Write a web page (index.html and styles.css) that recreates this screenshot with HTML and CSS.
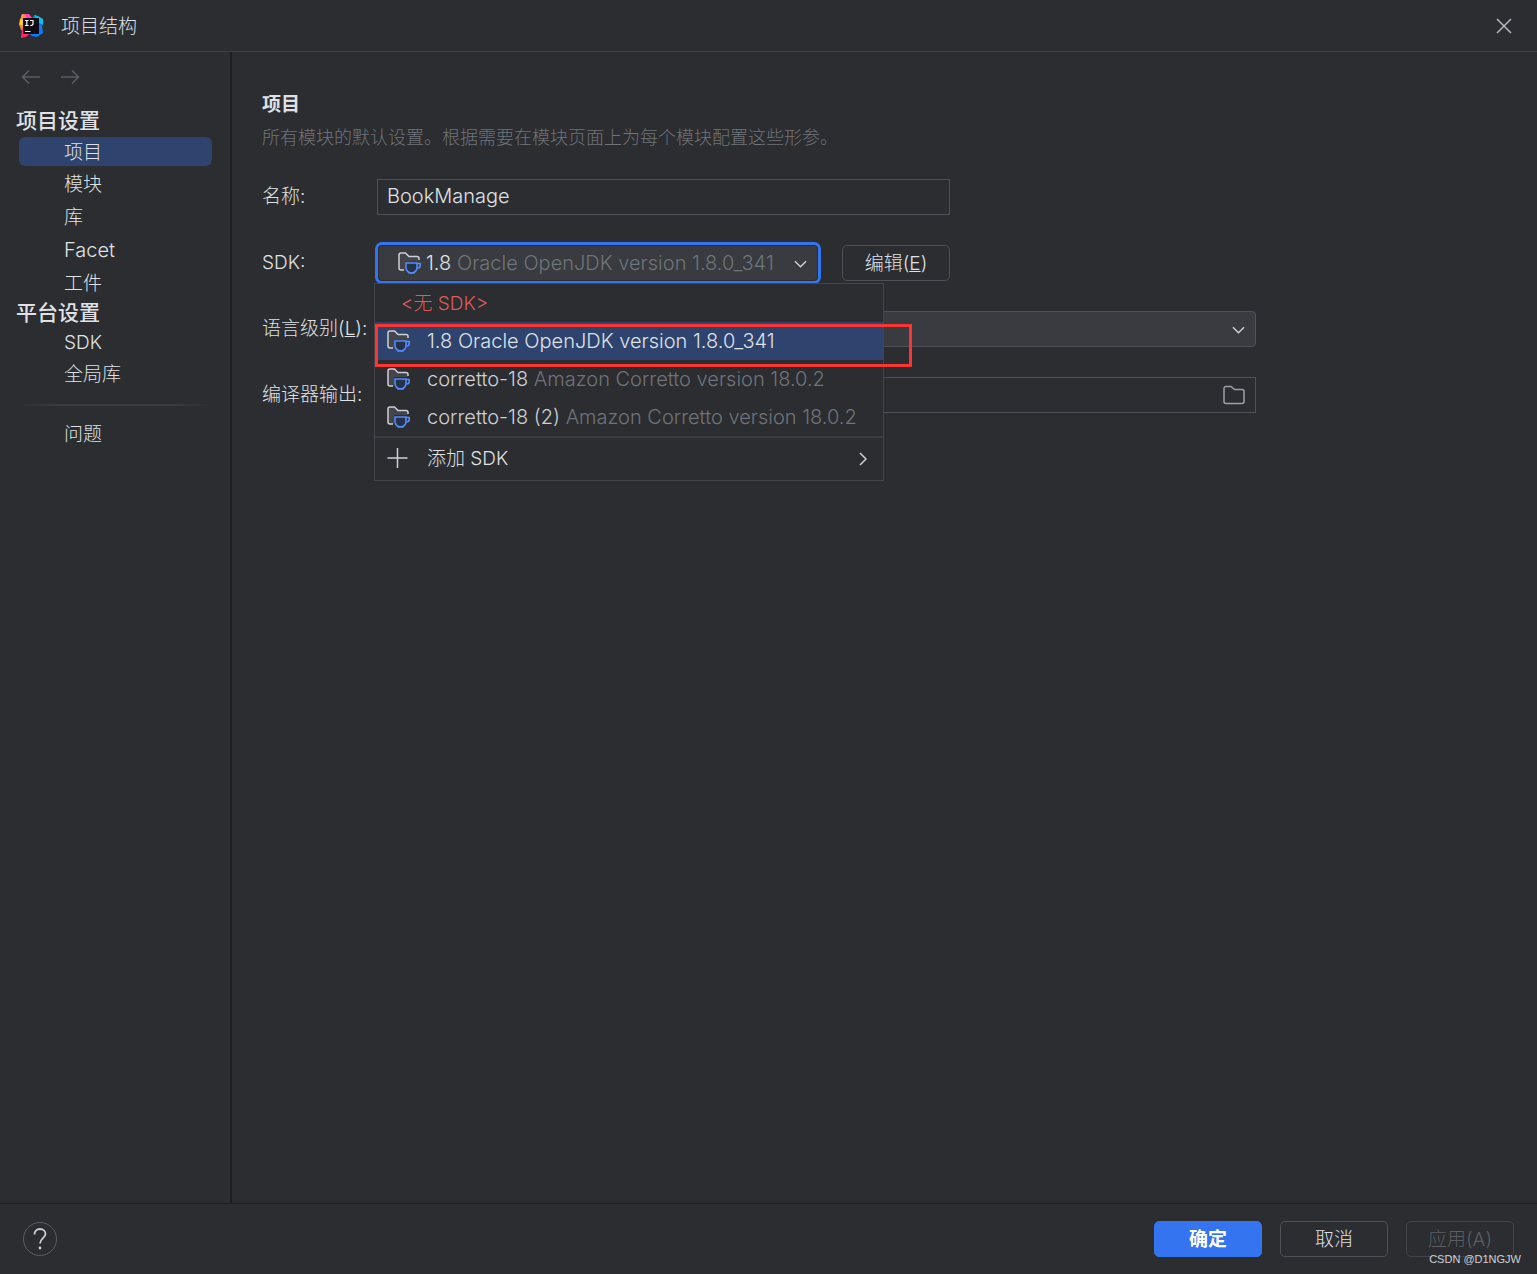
FILE: index.html
```html
<!DOCTYPE html>
<html lang="zh-CN">
<head>
<meta charset="utf-8">
<meta name="viewport" content="width=device-width, initial-scale=1">
<title>项目结构</title>
<link rel="stylesheet" href="styles.css">
</head>
<body>
<svg class="sprite" aria-hidden="true">
  <symbol id="jdk" viewBox="0 0 24 24">
    <path d="M8 19H4a2 2 0 0 1-2-2V4a2 2 0 0 1 2-2h4.500l3.500 3.500h8a2 2 0 0 1 2 2V10H8z" fill="#43454a"/>
    <path d="M7 19H4a2 2 0 0 1-2-2V4a2 2 0 0 1 2-2h4.500l3.500 3.500h8a2 2 0 0 1 2 2V9" fill="none" stroke="#ced0d6" stroke-width="1.500"/>
    <path d="M9 12h11v4.500a5.500 5.500 0 0 1-11 0z" fill="#25324d" stroke="#548af7" stroke-width="1.600"/>
    <path d="M20 12.500h3.200v2a2.500 2.500 0 0 1-2.500 2.500H20M11 21.800h7" fill="none" stroke="#548af7" stroke-width="1.600"/>
  </symbol>
  <symbol id="down" viewBox="0 0 14 8"><path d="M1 1l6 6 6-6" fill="none" stroke="#ced0d6" stroke-width="1.500"/></symbol>
</svg>

<header class="titlebar">
  <svg class="logo" viewBox="0 0 24 24" aria-hidden="true">
    <path d="M3 0l7 0 4 5-8 9-5-7z" fill="#ff45a5"/>
    <path d="M3 0l4 1-1 7-5-2z" fill="#ff9a3c"/>
    <path d="M1 5l5 2v7L0 11z" fill="#fdd02d"/>
    <path d="M0 10l6 2 1 6-5-2z" fill="#ff8a2a"/>
    <path d="M3 14l9 5-5 4-5 1z" fill="#fe2870"/>
    <path d="M13 4l3-3 6 4 2 14-6 4-5-1-4-3z" fill="#087cfa"/>
    <path d="M15 1l4 1 5 3v6l-5-3z" fill="#07c3f2"/>
    <path d="M4 4h16v16H4z" fill="#100b12"/>
    <path d="M6 6.500h3.600M7.800 6.500v5M6 11.500h3.600M11 6.500h3v3.500q0 1.500-2.800 1.500M6 17.500h5.500" fill="none" stroke="#fff" stroke-width="1.200"/>
  </svg>
  <h1>项目结构</h1>
  <button class="plain close" aria-label="关闭"><svg width="16" height="16" viewBox="0 0 16 16"><path d="M1 1l14 14M15 1L1 15" stroke="#b4b8bf" stroke-width="1.500"/></svg></button>
</header>

<div class="body">
  <nav class="sidebar">
    <div class="history">
      <button class="plain" aria-label="后退"><svg width="20" height="16" viewBox="0 0 20 16"><path d="M19 8H2M8 1.500L1.500 8 8 14.500" fill="none" stroke="#5a5d63" stroke-width="1.500"/></svg></button>
      <button class="plain" aria-label="前进"><svg width="20" height="16" viewBox="0 0 20 16"><path d="M1 8h17M12 1.500l6.500 6.500-6.500 6.500" fill="none" stroke="#5a5d63" stroke-width="1.500"/></svg></button>
    </div>
    <h2>项目设置</h2>
    <ul>
      <li><a class="current" href="#project" aria-current="page">项目</a></li>
      <li><a href="#modules">模块</a></li>
      <li><a href="#libraries">库</a></li>
      <li><a class="latin" href="#facets">Facet</a></li>
      <li><a href="#artifacts">工件</a></li>
    </ul>
    <h2>平台设置</h2>
    <ul class="compact">
      <li><a href="#sdks">SDK</a></li>
      <li><a href="#global">全局库</a></li>
    </ul>
    <hr>
    <ul class="compact">
      <li><a href="#problems">问题</a></li>
    </ul>
  </nav>

  <main class="content">
    <h2>项目</h2>
    <p class="hint">所有模块的默认设置。根据需要在模块页面上为每个模块配置这些形参。</p>
    <form class="form" id="project">
      <label for="name">名称:</label>
      <input class="field short latin" id="name" type="text" value="BookManage">

      <label for="sdk">SDK:</label>
      <div class="sdk-row short">
        <div class="combo focused latin">
          <select class="sdk-select" id="sdk">
            <option>1.8</option>
          </select>
          <span class="combo-text"><svg class="icon"><use href="#jdk"/></svg><span class="dim">Oracle OpenJDK version 1.8.0_341</span></span>
          <svg class="arrow"><use href="#down"/></svg>
          <div class="menu">
            <button type="button" class="item none">&lt;无 SDK&gt;</button>
            <button type="button" class="item active"><svg class="icon"><use href="#jdk"/></svg><span>1.8 Oracle OpenJDK version 1.8.0_341</span></button>
            <button type="button" class="item"><svg class="icon"><use href="#jdk"/></svg><span>corretto-18 <span class="dim">Amazon Corretto version 18.0.2</span></span></button>
            <button type="button" class="item"><svg class="icon"><use href="#jdk"/></svg><span>corretto-18 (2) <span class="dim">Amazon Corretto version 18.0.2</span></span></button>
            <button type="button" class="item add"><svg class="icon" viewBox="0 0 24 24"><path d="M11.500 1v20M1.500 11h20" stroke="#ced0d6" stroke-width="1.500"/></svg><span>添加 SDK</span><svg class="more" width="8" height="14" viewBox="0 0 8 14"><path d="M1 1l6 6-6 6" fill="none" stroke="#ced0d6" stroke-width="1.500"/></svg></button>
            <div class="marker"></div>
          </div>
        </div>
        <button type="button" class="btn">编辑(<u>E</u>)</button>
      </div>

      <label for="level">语言级别(<u>L</u>):</label>
      <div class="combo">
        <select id="level"></select>
        <svg class="arrow"><use href="#down"/></svg>
      </div>

      <label for="output">编译器输出:</label>
      <div class="browse">
        <input class="field" id="output" type="text">
        <button type="button" class="plain" aria-label="浏览"><svg width="22" height="20" viewBox="0 0 22 20"><path d="M1 3.500A2 2 0 0 1 3 1.500h5l3.500 3H19a2 2 0 0 1 2 2v10a2 2 0 0 1-2 2H3a2 2 0 0 1-2-2z" fill="none" stroke="#9da0a8" stroke-width="1.500"/></svg></button>
      </div>
    </form>
  </main>
</div>

<footer class="footer">
  <button class="help" aria-label="帮助"><svg width="14" height="22" viewBox="0 0 14 22"><path d="M1.500 6.500C1.500 3 4 1 7 1s5.500 2 5.500 5c0 4-5.500 4.500-5.500 9.500" fill="none" stroke="#ced0d6" stroke-width="1.800"/><circle cx="7" cy="20" r="1.400" fill="#ced0d6"/></svg></button>
  <button class="btn primary">确定</button>
  <button class="btn">取消</button>
  <button class="btn" disabled>应用(A)</button>
  <span class="watermark">CSDN @D1NGJW</span>
</footer>
</body>
</html>
```
FILE: styles.css
```css
* { box-sizing: border-box; }

body {
  margin: 0;
  min-height: 100vh;
  display: flex;
  flex-direction: column;
  background: #2b2d30;
  color: #dfe1e5;
  font: 300 19px/24px Inter, "Noto Sans CJK SC", sans-serif;
}

h1, h2, p, ul { margin: 0; padding: 0; }
h1 { padding-top: 2px; font-size: 19px; font-weight: 300; }
ul { list-style: none; }
svg { display: block; flex: none; }
button, input, select { font: inherit; color: inherit; }
.sprite { position: absolute; width: 0; height: 0; }
.plain { display: flex; padding: 0; border: 0; background: none; }
.latin { font-size: 20px; }
.dim { color: #6f737a; }

.titlebar {
  display: flex;
  align-items: center;
  height: 52px;
  padding: 0 25px 0 19px;
  border-bottom: 1px solid #3c3e41;
}
.logo { width: 24px; height: 24px; margin-right: 18px; }
.close { margin-left: auto; }

.body { flex: 1; display: flex; }

.sidebar {
  flex: none;
  width: 232px;
  padding: 17px 18px 0 19px;
  border-right: 2px solid #1e1f22;
}
.history { display: flex; gap: 19px; padding: 0 2px; margin-bottom: 23px; }
.sidebar h2 {
  height: 26px;
  margin-left: -3px;
  font-size: 21px;
  font-weight: 500;
  line-height: 26px;
}
.sidebar a {
  display: block;
  padding-left: 45px;
  border-radius: 6px;
  color: inherit;
  line-height: 33px;
  text-decoration: none;
}
.sidebar .current {
  height: 29px;
  margin: 3px 0 2px;
  background: #2e436e;
  line-height: 31px;
}
.sidebar .compact { padding-top: 1px; }
.sidebar .compact a { line-height: 32px; }
.sidebar hr {
  height: 2px;
  margin: 13px 0 12px;
  border: 0;
  background: linear-gradient(90deg, transparent, #3a3c40 20%, #3a3c40 80%, transparent);
}

.content { flex: 1; min-width: 0; padding: 41px 30px; }
.content h2 { font-size: 19px; font-weight: 700; }
.hint { margin: 9px 0 29px; color: #6f737a; font-size: 18px; }

.form {
  display: grid;
  grid-template-columns: 115px minmax(0, 1fr);
  grid-auto-rows: 36px;
  row-gap: 30px;
  align-items: center;
  max-width: 994px;
}
.form label { white-space: nowrap; }
.short { max-width: 573px; }
.field {
  width: 100%;
  height: 36px;
  padding: 0 9px 2px;
  border: 1px solid #4e5157;
  background: none;
  outline: 0;
}
.sdk-row { display: flex; gap: 24px; }
.combo { position: relative; flex: 1; height: 36px; }
.combo select {
  width: 100%;
  height: 36px;
  padding: 0 0 0 47px;
  border: 1px solid #4e5157;
  border-radius: 4px;
  outline: 0;
  background: #393b40;
  appearance: none;
}
.focused { margin-left: 1px; }
.focused select { border-color: #2b2d30; outline: 3px solid #3574f0; }
.combo-text {
  position: absolute;
  inset: 0 auto 0 19px;
  display: flex;
  align-items: center;
  gap: 36px;
  pointer-events: none;
}
.arrow { position: absolute; right: 11px; top: 15px; width: 13px; height: 8px; pointer-events: none; }
.icon { width: 24px; height: 24px; }

.menu {
  position: absolute;
  z-index: 1;
  left: -4px;
  top: 38px;
  width: 510px;
  border: 1px solid #43454a;
  background: #2b2d30;
}
.item {
  display: flex;
  align-items: center;
  gap: 17px;
  width: 100%;
  height: 38px;
  padding: 0 16px 0 11px;
  border: 0;
  background: none;
  color: #ced0d6;
  text-align: left;
  white-space: nowrap;
}
.none { padding: 2px 0 0 26px; color: #db5c5c; }
.active { background: #2e436e; color: #dfe1e5; }
.none, .add { font-size: 19px; }
.add { height: 44px; border-top: 2px solid #393b40; color: #dfe1e5; }
.more { margin-left: auto; }
.marker {
  position: absolute;
  left: 0;
  top: 40px;
  width: 537px;
  height: 43px;
  border: 3px solid #fc3532;
  pointer-events: none;
}

.browse { position: relative; }
.browse button { position: absolute; right: 11px; top: 8px; }

.btn {
  width: 108px;
  height: 36px;
  padding: 2px 0 0;
  border: 1px solid #4e5157;
  border-radius: 5px;
  background: none;
}
.primary { border-color: #3574f0; background: #3574f0; color: #fff; font-weight: 700; }
.btn:disabled { border-color: #43454a; color: #5a5d63; }

.footer {
  position: relative;
  display: flex;
  align-items: center;
  gap: 18px;
  height: 71px;
  padding: 0 23px;
  border-top: 1px solid #1e1f22;
}
.help {
  display: grid;
  place-items: center;
  width: 34px;
  height: 34px;
  margin-right: auto;
  padding: 0;
  border: 1px solid #5a5d63;
  border-radius: 50%;
  background: none;
}
.watermark {
  position: absolute;
  right: 16px;
  bottom: 7px;
  color: #ced0d6;
  font: 11px/16px "Liberation Sans", sans-serif;
}
```
